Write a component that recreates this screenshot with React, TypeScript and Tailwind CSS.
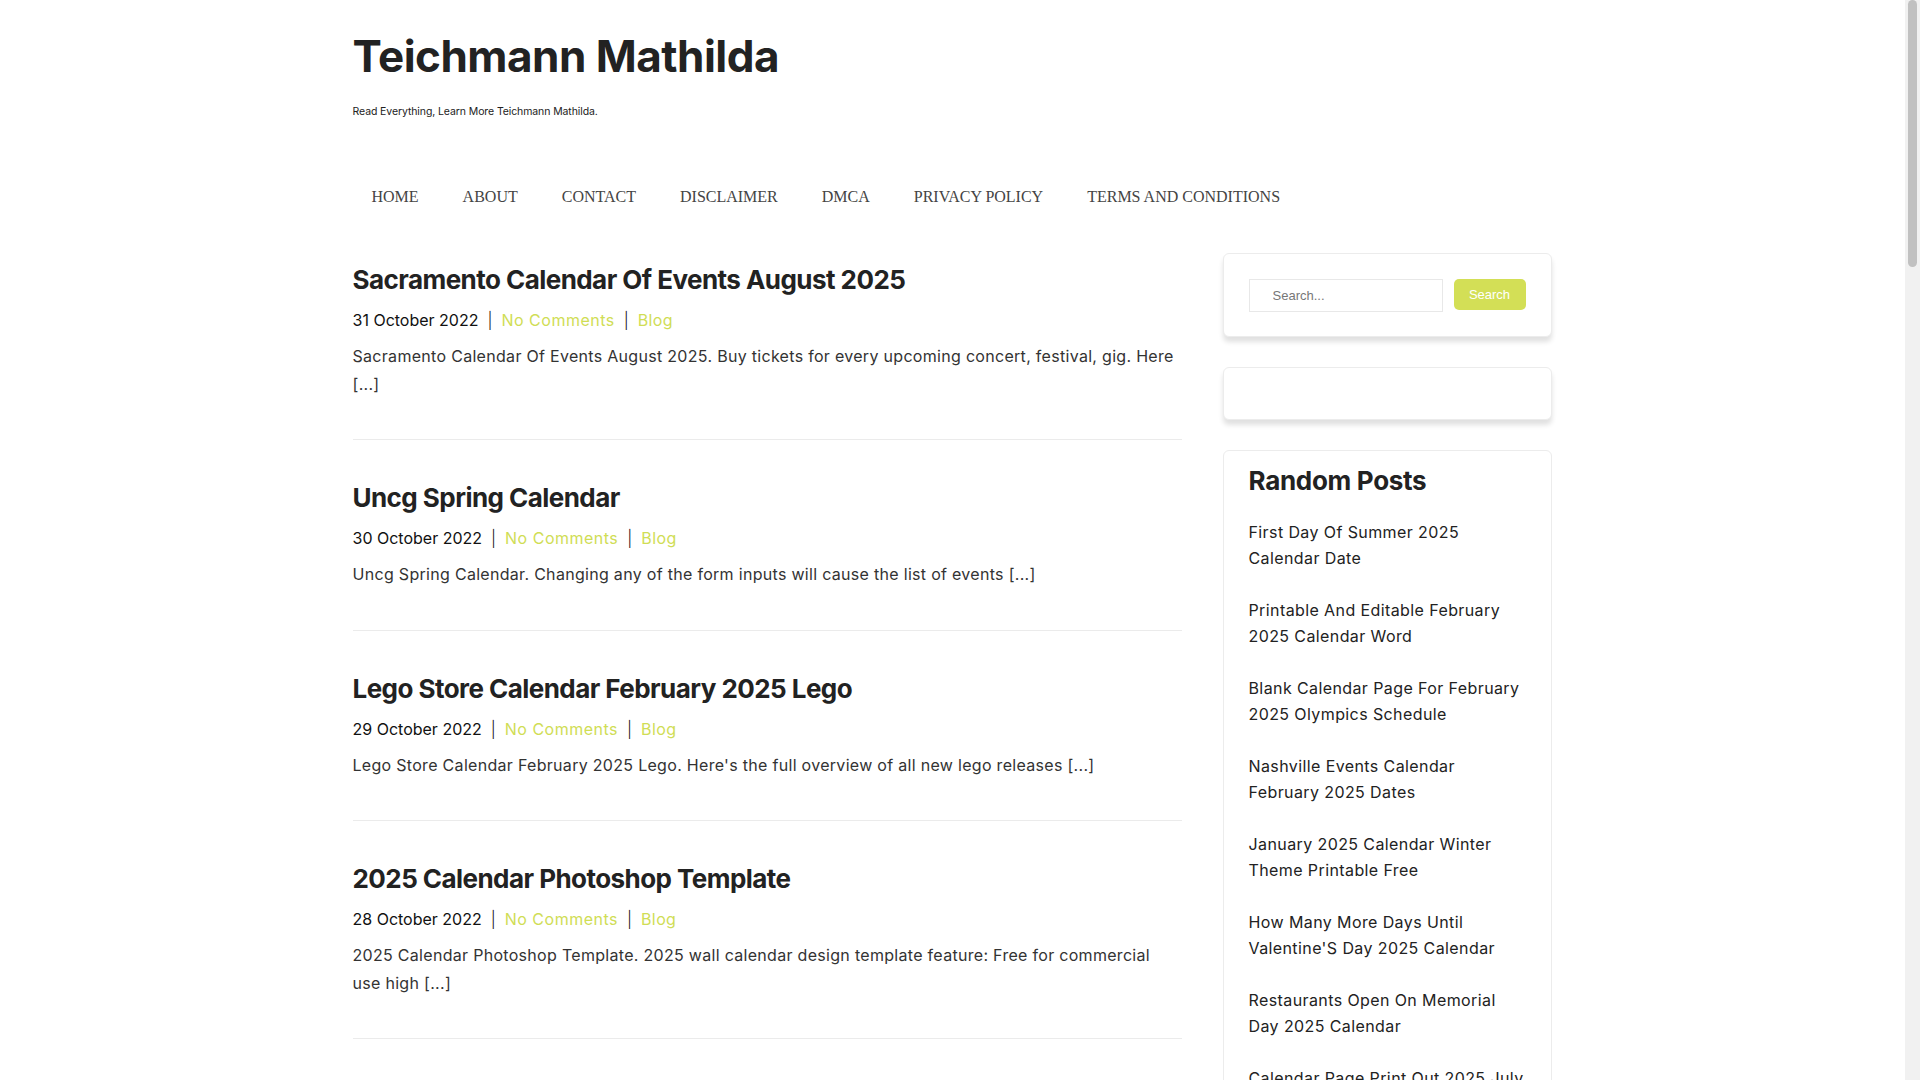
import React from "react";

const posts = [
  {
    title: "Sacramento Calendar Of Events August 2025",
    date: "31 October 2022",
    excerpt:
      "Sacramento Calendar Of Events August 2025. Buy tickets for every upcoming concert, festival, gig. Here [...]",
  },
  {
    title: "Uncg Spring Calendar",
    date: "30 October 2022",
    excerpt:
      "Uncg Spring Calendar. Changing any of the form inputs will cause the list of events [...]",
  },
  {
    title: "Lego Store Calendar February 2025 Lego",
    date: "29 October 2022",
    excerpt:
      "Lego Store Calendar February 2025 Lego. Here's the full overview of all new lego releases [...]",
  },
  {
    title: "2025 Calendar Photoshop Template",
    date: "28 October 2022",
    excerpt:
      "2025 Calendar Photoshop Template. 2025 wall calendar design template feature: Free for commercial use high [...]",
  },
  {
    title: "Printable Calendar 2025 With Holidays",
    date: "27 October 2022",
    excerpt:
      "Printable Calendar 2025 With Holidays. Download free printable calendars for every month of the year [...]",
  },
];

const randomPosts = [
  "First Day Of Summer 2025 Calendar Date",
  "Printable And Editable February 2025 Calendar Word",
  "Blank Calendar Page For February 2025 Olympics Schedule",
  "Nashville Events Calendar February 2025 Dates",
  "January 2025 Calendar Winter Theme Printable Free",
  "How Many More Days Until Valentine'S Day 2025 Calendar",
  "Restaurants Open On Memorial Day 2025 Calendar",
  "Calendar Page Print Out 2025 July Fourth",
  "Free Printable 2025 Calendar With Week Numbers",
];

const nav = [
  "HOME",
  "ABOUT",
  "CONTACT",
  "DISCLAIMER",
  "DMCA",
  "PRIVACY POLICY",
  "TERMS AND CONDITIONS",
];

export default function App() {
  return (
    <div className="relative h-[1080px] overflow-hidden bg-white font-['Inter',sans-serif] text-[#222]">
      <div className="w-[1905px]">
        <div className="mx-auto w-[1200px]">
          <header className="pt-[28px]">
            <h1 className="text-[44px] font-bold leading-[56px] tracking-[-0.5px] text-[#222]">
              Teichmann Mathilda
            </h1>
            <p className="mt-[20px] text-[10.5px] leading-[16px] tracking-[-0.1px] text-[#222]">
              Read Everything, Learn More Teichmann Mathilda.
            </p>
          </header>
          <nav className="mt-[52px] flex h-[50px] items-center gap-[44px] pl-[19px] font-['Liberation_Serif',serif] text-[16px] text-[#444]">
            {nav.map((n) => (
              <a key={n} href="#" className="whitespace-nowrap">
                {n}
              </a>
            ))}
          </nav>
          <div className="flex gap-[41px]">
            <main className="w-[829px]">
              {posts.map((p) => (
                <article
                  key={p.title}
                  className="border-b border-[#ebebeb] py-[41px]"
                >
                  <h2 className="text-[26px] font-bold leading-[34px] tracking-[-0.55px] text-[#222]">
                    {p.title}
                  </h2>
                  <div className="mt-[10px] flex items-center text-[16px] leading-[26px]">
                    <span className="text-[#111]">{p.date}</span>
                    <span className="mx-[9px] font-light text-[#111]">|</span>
                    <a href="#" className="tracking-[0.5px] text-[#d0dd55]">
                      No Comments
                    </a>
                    <span className="mx-[9px] font-light text-[#111]">|</span>
                    <a href="#" className="tracking-[0.4px] text-[#d0dd55]">
                      Blog
                    </a>
                  </div>
                  <p className="mt-[10px] text-[16px] leading-[27.5px] tracking-[0.3px] text-[#333]">
                    {p.excerpt}
                  </p>
                </article>
              ))}
            </main>
            <aside className="mt-[31px] flex w-[329px] flex-col gap-[30px]">
              <div className="rounded-[6px] border border-[#ececec] bg-white px-[25px] pt-[25px] pb-[24px] shadow-[0_5px_5px_rgba(0,0,0,0.12)]">
                <div className="flex items-start gap-[11px]">
                  <input
                    placeholder="Search..."
                    className="h-[33px] w-[194px] border border-[#e8e8e8] px-[23px] font-['Liberation_Sans',sans-serif] text-[13px] text-[#444] outline-none placeholder:text-[#777]"
                  />
                  <button className="h-[31px] w-[73px] rounded-[5px] bg-[#d3df56] font-['Liberation_Sans',sans-serif] text-[13px] text-white">
                    Search
                  </button>
                </div>
              </div>
              <div className="h-[53px] rounded-[6px] border border-[#ececec] bg-white shadow-[0_5px_5px_rgba(0,0,0,0.12)]"></div>
              <div className="rounded-[6px] border border-[#ececec] bg-white px-[25px] pt-[13px] pb-[30px]">
                <h3 className="text-[26px] font-bold leading-[34px] tracking-[-0.3px] text-[#222]">
                  Random Posts
                </h3>
                <ul className="mt-[21px] flex flex-col gap-[26px]">
                  {randomPosts.map((r) => (
                    <li key={r}>
                      <a
                        href="#"
                        className="block text-[16px] leading-[26px] tracking-[0.4px] text-[#222]"
                      >
                        {r}
                      </a>
                    </li>
                  ))}
                </ul>
              </div>
            </aside>
          </div>
        </div>
      </div>
      <div className="absolute top-0 right-0 h-[1080px] w-[15px] bg-[#f1f1f1]">
        <div className="mx-auto h-[267px] w-[9px] rounded-[5px] bg-[#c1c1c1]"></div>
      </div>
    </div>
  );
}
